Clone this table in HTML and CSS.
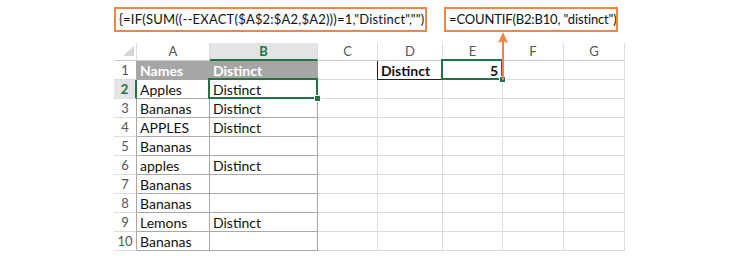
FILE: index.html
```html
<!DOCTYPE html>
<html>
<head>
<meta charset="utf-8">
<link rel="stylesheet" href="styles.css">
</head>
<body>
<div class="page">
  <div class="formulas">
    <div class="fbox f1">{=IF(SUM((--EXACT($A$2:$A2,$A2)))=1,"Distinct","")</div>
    <div class="fbox f2">=COUNTIF(B2:B10, "distinct")</div>
  </div>
  <div class="sheet">
    <div class="ch corner"><span class="tri"></span></div>
    <div class="ch">A</div>
    <div class="ch active">B</div>
    <div class="ch">C</div>
    <div class="ch">D</div>
    <div class="ch">E</div>
    <div class="ch">F</div>
    <div class="ch">G</div>

    <div class="rh">1</div>
    <div class="c t th">Names</div>
    <div class="c t th last">Distinct</div>
    <div class="c"></div>
    <div class="c dlabel">Distinct</div>
    <div class="c num sel">5</div>
    <div class="c"></div>
    <div class="c"></div>

    <div class="rh active">2</div>
    <div class="c t">Apples</div>
    <div class="c t sel">Distinct</div>
    <div class="c"></div><div class="c"></div><div class="c"></div><div class="c"></div><div class="c"></div>

    <div class="rh">3</div>
    <div class="c t">Bananas</div>
    <div class="c t">Distinct</div>
    <div class="c"></div><div class="c"></div><div class="c"></div><div class="c"></div><div class="c"></div>

    <div class="rh">4</div>
    <div class="c t">APPLES</div>
    <div class="c t">Distinct</div>
    <div class="c"></div><div class="c"></div><div class="c"></div><div class="c"></div><div class="c"></div>

    <div class="rh">5</div>
    <div class="c t">Bananas</div>
    <div class="c t"></div>
    <div class="c"></div><div class="c"></div><div class="c"></div><div class="c"></div><div class="c"></div>

    <div class="rh">6</div>
    <div class="c t">apples</div>
    <div class="c t">Distinct</div>
    <div class="c"></div><div class="c"></div><div class="c"></div><div class="c"></div><div class="c"></div>

    <div class="rh">7</div>
    <div class="c t">Bananas</div>
    <div class="c t"></div>
    <div class="c"></div><div class="c"></div><div class="c"></div><div class="c"></div><div class="c"></div>

    <div class="rh">8</div>
    <div class="c t">Bananas</div>
    <div class="c t"></div>
    <div class="c"></div><div class="c"></div><div class="c"></div><div class="c"></div><div class="c"></div>

    <div class="rh">9</div>
    <div class="c t">Lemons</div>
    <div class="c t">Distinct</div>
    <div class="c"></div><div class="c"></div><div class="c"></div><div class="c"></div><div class="c"></div>

    <div class="rh">10</div>
    <div class="c t">Bananas</div>
    <div class="c t"></div>
    <div class="c"></div><div class="c"></div><div class="c"></div><div class="c"></div><div class="c"></div>

    <svg class="arrow" width="12" height="49" viewBox="0 0 12 49">
      <line x1="6" y1="6" x2="6" y2="48" stroke="#f08543" stroke-width="2"/>
      <polygon points="6,0 11,11 6,9 1,11" fill="#f08543"/>
    </svg>
  </div>
</div>
</body>
</html>
```

FILE: styles.css
```css
html, body {
  margin: 0;
  padding: 0;
  background: #ffffff;
}

.page {
  width: 750px;
  height: 270px;
  box-sizing: border-box;
  padding: 7px 0 0 114px;
  font-family: "Lato", "Liberation Sans", sans-serif;
  color: #111;
}

.formulas {
  display: flex;
  gap: 17px;
  height: 25px;
}

.fbox {
  box-sizing: border-box;
  border: 2px solid #f08543;
  height: 25px;
  line-height: 21px;
  padding-left: 3px;
  font-size: 13px;
  white-space: nowrap;
  overflow: hidden;
}

.f1 { width: 313px; letter-spacing: 0.2px; }
.f2 { width: 174px; letter-spacing: -0.15px; }

.sheet {
  position: relative;
  margin-top: 11px;
  display: grid;
  grid-template-columns: 23px 73px 108px 60px 65px 60px 61px 61px;
  grid-template-rows: 18px repeat(10, 19px);
  width: 511px;
  font-size: 14px;
}

.ch {
  box-sizing: border-box;
  border-right: 1px solid #dcdcdc;
  border-bottom: 1px solid #c8c8c8;
  text-align: center;
  line-height: 17px;
  color: #555;
  font-size: 13px;
}

.ch.active {
  background: #e4e4e4;
  border-bottom: 2px solid #217346;
  color: #217346;
  font-weight: bold;
}

.corner {
  position: relative;
}

.tri {
  position: absolute;
  right: 2px;
  bottom: 4px;
  width: 0;
  height: 0;
  border-left: 11px solid transparent;
  border-bottom: 10px solid #d6d6d6;
}

.rh {
  box-sizing: border-box;
  border-right: 1px solid #a8a8a8;
  border-bottom: 1px solid #dcdcdc;
  text-align: center;
  line-height: 19px;
  color: #555;
  font-size: 13px;
}

.rh.active {
  background: #e4e4e4;
  border-right: 2px solid #217346;
  color: #217346;
  font-weight: bold;
}

.c {
  position: relative;
  box-sizing: border-box;
  border-right: 1px solid #dcdcdc;
  border-bottom: 1px solid #dcdcdc;
  padding-left: 3px;
  line-height: 19px;
  white-space: nowrap;
}

.c.t {
  border-right-color: #a8a8a8;
  border-bottom-color: #a8a8a8;
}

.c.th {
  background: #a6a6a6;
  color: #ffffff;
  font-weight: bold;
  border-color: #a6a6a6;
}

.c.th.last {
  border-right-color: #a6a6a6;
}

.dlabel {
  font-weight: bold;
  border-left: 1px solid #222;
  border-bottom: 1px solid #222;
  margin-left: -1px;
}

.num {
  text-align: right;
  padding-right: 4px;
  font-weight: bold;
}

.sel::before {
  content: "";
  position: absolute;
  left: -2px;
  top: -2px;
  right: -1px;
  bottom: -1px;
  border: 2px solid #217346;
}

.sel::after {
  content: "";
  position: absolute;
  right: -4px;
  bottom: -4px;
  width: 5px;
  height: 5px;
  background: #217346;
  border: 1px solid #fff;
  z-index: 2;
}

.arrow {
  position: absolute;
  left: 383px;
  top: -11px;
  z-index: 3;
}
```
